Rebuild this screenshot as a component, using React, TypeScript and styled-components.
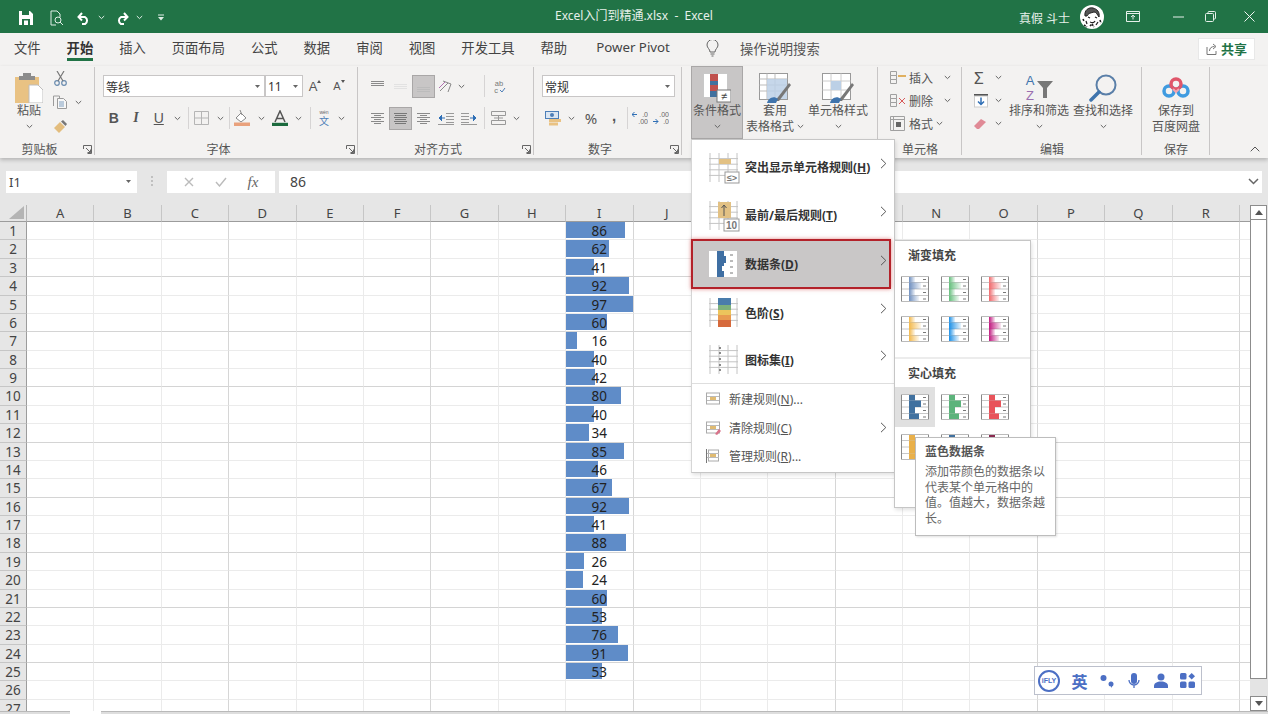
import React from 'react';
import styled, { createGlobalStyle } from 'styled-components';

const GlobalStyle = createGlobalStyle`
    html, body { margin: 0; padding: 0; background: #fff; }
    body { font-family: "Noto Sans", "Noto Sans CJK SC", sans-serif; font-size: 12px; color: #444; }
    * { box-sizing: border-box; }
`;

const Page = styled.div`
    position: relative;
    width: 1268px;
    height: 714px;
    overflow: hidden;
`;

/* title bar */
const TitleBar = styled.div`
    display: flex;
    align-items: center;
    height: 33px;
    background: #217346;
    color: #fff;
`;
const QuickAccess = styled.div`
    display: flex;
    align-items: center;
    width: 555px;
    padding: 2px 0 0 14px;
`;
const DocTitle = styled.div`
    font-size: 12px;
    white-space: pre;
    color: #e6f0ea;
    margin-top: -3px;
`;
const UserName = styled.div`
    margin-left: auto;
    font-size: 12px;
    white-space: pre;
    color: #e6f0ea;
    margin-top: 2px;
`;
const Avatar = styled.div`
    width: 24px;
    height: 24px;
    margin: 0 0 0 10px;
    border-radius: 50%;
    overflow: hidden;
    background: #fff;
`;
const WinBtn = styled.div<{ $w: number; $ml?: number }>`
    width: ${p => p.$w}px;
    margin-left: ${p => p.$ml || 0}px;
    display: flex;
    justify-content: center;
    align-items: center;
`;

/* tabs */
const TabRow = styled.div`
    display: flex;
    align-items: center;
    height: 33px;
    padding: 0 0 2px 14px;
    gap: 26px;
    background: #f3f2f1;
`;
const Tab = styled.div<{ $active?: boolean; $ml?: number }>`
    height: 25px;
    margin-left: ${p => p.$ml || 0}px;
    display: flex;
    align-items: center;
    font-size: 13.3px;
    color: ${p => (p.$active ? '#333' : '#444')};
    font-weight: ${p => (p.$active ? 700 : 400)};
    border-bottom: 3px solid ${p => (p.$active ? '#217346' : 'transparent')};
    white-space: nowrap;
`;
const TellMe = styled.div`
    display: flex;
    align-items: center;
    gap: 21px;
    margin-left: 10px;
    font-size: 13.3px;
    color: #555;
`;
const ShareBtn = styled.div`
    margin: 0 13px 0 auto;
    width: 57px;
    height: 22px;
    background: #fff;
    border: 1px solid #e8e8e8;
    display: flex;
    align-items: center;
    justify-content: center;
    gap: 3px;
    font-weight: 700;
    font-size: 13px;
    color: #217346;
`;

/* ribbon */
const Ribbon = styled.div`
    position: relative;
    z-index: 1;
    display: flex;
    height: 92px;
    background: #f3f2f1;
    box-shadow: 0 2px 4px rgba(0, 0, 0, 0.22);
`;
const Group = styled.div<{ $w: number; $plain?: boolean }>`
    position: relative;
    width: ${p => p.$w}px;
    display: flex;
    flex-direction: column;
    ${p => !p.$plain && `
        &::after {
            content: "";
            position: absolute;
            right: 0;
            top: 1px;
            bottom: 3px;
            width: 1px;
            background: #c8c6c6;
        }
    `}
`;
const GroupBody = styled.div<{ $pl?: number }>`
    height: 76px;
    padding-left: ${p => p.$pl || 0}px;
    display: flex;
`;
const GroupLabel = styled.div`
    flex: 1;
    display: flex;
    align-items: center;
    font-size: 12px;
    color: #555;
`;
const LabelText = styled.span`
    flex: 1;
    text-align: center;
`;
const Launcher = styled.span`
    width: 16px;
    display: flex;
    justify-content: center;
    padding-top: 1px;
`;
const Stack = styled.div`
    display: flex;
    flex-direction: column;
    gap: 10px;
    padding-top: 9px;
`;
const Line = styled.div`
    display: flex;
    align-items: center;
    height: 22px;
`;
const Tool = styled.span<{ $w: number; $on?: boolean }>`
    width: ${p => p.$w}px;
    height: 22px;
    flex: none;
    display: flex;
    align-items: center;
    justify-content: center;
    ${p => p.$on && 'background: #c8c6c6; box-shadow: inset 0 0 0 1px #a9a7a7; height: 23px;'}
`;
const Letter = styled.span<{ $i?: boolean; $u?: boolean }>`
    font-family: "Liberation Serif", serif;
    font-size: 14px;
    font-weight: 700;
    color: #555;
    font-style: ${p => (p.$i ? 'italic' : 'normal')};
    text-decoration: ${p => (p.$u ? 'underline' : 'none')};
`;
const Sans = styled(Letter)`
    font-family: "Liberation Sans", sans-serif;
`;
const Glyph = styled.span<{ $size: number }>`
    font-size: ${p => p.$size}px;
    line-height: 1;
    color: #555;
`;
const VSep = styled.span<{ $ml?: number; $mr?: number }>`
    width: 1px;
    height: 22px;
    flex: none;
    margin: 0 ${p => p.$mr || 0}px 0 ${p => p.$ml || 0}px;
    background: #d6d4d4;
`;
const Combo = styled.div<{ $w: number }>`
    width: ${p => p.$w}px;
    height: 22px;
    flex: none;
    background: #fff;
    border: 1px solid #c8c6c6;
    display: flex;
    align-items: center;
    justify-content: space-between;
    padding: 1px 4px 0 2px;
    font-size: 12px;
    color: #333;
`;
const BigBtn = styled.div<{ $w: number; $on?: boolean }>`
    width: ${p => p.$w}px;
    height: 73px;
    flex: none;
    padding-top: 6px;
    display: flex;
    flex-direction: column;
    align-items: center;
    line-height: 15px;
    font-size: 12px;
    color: #555;
    white-space: nowrap;
    ${p => p.$on && 'background: #c8c6c6; box-shadow: inset 0 0 0 1px #a9a7a7;'}
`;
const BigIcon = styled.div`
    height: 31px;
    display: flex;
    align-items: center;
    justify-content: center;
`;
const CapLine = styled.div`
    height: 16px;
    display: flex;
    align-items: center;
    gap: 3px;
`;
const SideRows = styled.div<{ $w?: number; $pl?: number }>`
    ${p => p.$w && `width: ${p.$w}px;`}
    padding-left: ${p => p.$pl || 0}px;
    display: flex;
    flex-direction: column;
    flex: none;
`;
const SideRow = styled.div<{ $h?: number }>`
    height: ${p => p.$h || 23}px;
    display: flex;
    align-items: center;
    gap: 3px;
    font-size: 12px;
    color: #555;
`;
const CollapseSlot = styled.div`
    position: absolute;
    right: 8px;
    bottom: 2px;
`;

/* formula bar */
const FormulaRow = styled.div`
    display: flex;
    align-items: center;
    height: 47px;
    padding: 1px 6px 0 6px;
    background: #e6e6e6;
`;
const NameBox = styled.div`
    width: 131px;
    height: 22px;
    background: #fff;
    display: flex;
    align-items: center;
    justify-content: space-between;
    padding: 0 6px 1px 3px;
    font-size: 13px;
    color: #444;
`;
const Grip = styled.div`
    width: 30px;
    display: flex;
    justify-content: center;
`;
const FxBox = styled.div`
    width: 108px;
    height: 22px;
    background: #fff;
    display: flex;
    align-items: center;
    justify-content: space-around;
    padding: 0 6px;
`;
const FxText = styled.span`
    font-family: "Liberation Serif", serif;
    font-style: italic;
    font-size: 15px;
    color: #666;
`;
const FormulaInput = styled.div`
    flex: 1;
    height: 22px;
    margin-left: 4px;
    background: #fff;
    display: flex;
    align-items: center;
    justify-content: space-between;
    padding: 0 3px 1px 11px;
    font-size: 14px;
    color: #444;
`;

/* sheet */
const SheetRow = styled.div`
    display: flex;
    height: 506px;
`;
const Sheet = styled.div`
    width: 1250px;
    overflow: hidden;
    display: grid;
    grid-template-columns: 27px repeat(19, 67.4px);
    grid-template-rows: 17px repeat(27, 18.375px);
`;
const Corner = styled.div`
    background: #e6e6e6;
    border-right: 1px solid #b5b5b5;
    border-bottom: 1px solid #9c9c9c;
    display: flex;
    align-items: flex-end;
    justify-content: flex-end;
    padding: 0 2px 2px 0;
`;
const ColHead = styled.div`
    background: #e6e6e6;
    border-right: 1px solid #c6c6c6;
    border-bottom: 1px solid #9c9c9c;
    font-size: 13px;
    line-height: 16px;
    text-align: center;
    color: #444;
`;
const RowHead = styled.div`
    background: #e6e6e6;
    border-right: 1px solid #9c9c9c;
    border-bottom: 1px solid #c6c6c6;
    font-size: 13.5px;
    line-height: 19.5px;
    text-align: center;
    color: #444;
`;
const Cell = styled.div<{ $darkCol: boolean; $darkRow: boolean }>`
    position: relative;
    border-right: 1px solid ${p => (p.$darkCol ? '#d6d6d6' : '#ebebeb')};
    border-bottom: 1px solid ${p => (p.$darkRow ? '#d4d4d4' : '#ebebeb')};
    font-size: 13.5px;
    line-height: 19.5px;
    text-align: center;
    color: #222;
`;
const Bar = styled.div`
    position: absolute;
    left: 0;
    top: 0;
    bottom: 1px;
    background: #5f8cc8;
`;
const CellValue = styled.span`
    position: relative;
`;
const ScrollTrack = styled.div`
    width: 18px;
    background: #e4e4e4;
    display: flex;
    flex-direction: column;
    padding: 0 1px 0 0;
`;
const ScrollBtn = styled.div`
    height: 15px;
    flex: none;
    background: #fff;
    border: 1px solid #8c8c8c;
    display: flex;
    align-items: center;
    justify-content: center;
`;
const ScrollThumb = styled.div`
    height: 459px;
    flex: none;
    background: #fff;
    border: 1px solid #8c8c8c;
    border-top: none;
`;
const ScrollGap = styled.div`
    flex: 1;
`;
const BottomStrip = styled.div`
    display: flex;
    height: 3px;
`;
const StripPiece = styled.div<{ $w: number; $white?: boolean }>`
    width: ${p => p.$w}px;
    background: ${p => (p.$white ? '#fff' : '#dedede')};
    ${p => !p.$white && 'border-top: 1px solid #b9b9b9;'}
`;

/* floating menu */
const Menu = styled.div`
    position: absolute;
    z-index: 5;
    left: 691px;
    top: 139px;
    width: 204px;
    height: 334px;
    padding-top: 3px;
    background: #fff;
    border: 1px solid #c6c6c6;
    border-left-color: #d6d6d6;
    box-shadow: 1px 2px 4px rgba(0, 0, 0, 0.12);
`;
const BigItem = styled.div<{ $h: number; $on?: boolean }>`
    height: ${p => p.$h}px;
    display: flex;
    align-items: center;
    font-size: 12px;
    font-weight: 700;
    color: #333;
    ${p => p.$on && `
        background: #c9c7c7;
        margin: 0 3px 0 -1px;
        border: 2px solid #b3222a;
        box-shadow: 0 0 4px rgba(200, 40, 40, 0.55);
    `}
`;
const BigItemIcon = styled.div<{ $w?: number; $pl?: number }>`
    width: ${p => p.$w || 53}px;
    padding-left: ${p => p.$pl || 17}px;
    flex: none;
    display: flex;
    align-items: center;
`;
const ItemText = styled.span`
    flex: 1;
    white-space: nowrap;
`;
const ItemChevron = styled.span<{ $w?: number; $mt?: number }>`
    width: ${p => p.$w || 14}px;
    flex: none;
    display: flex;
    margin-top: ${p => (p.$mt === undefined ? -8 : p.$mt)}px;
`;
const MenuSep = styled.div`
    height: 1px;
    margin: 0 0 1px;
    background: #dedede;
`;
const SmallItem = styled.div`
    height: 28.5px;
    display: flex;
    align-items: center;
    font-size: 12px;
    color: #555;
`;
const SmallIcon = styled.div`
    width: 37px;
    padding-left: 14px;
    flex: none;
    display: flex;
`;
const SubMenu = styled.div`
    position: absolute;
    z-index: 6;
    left: 894px;
    top: 240px;
    width: 137px;
    height: 268px;
    background: #fff;
    border: 1px solid #c6c6c6;
    box-shadow: 1px 2px 4px rgba(0, 0, 0, 0.12);
`;
const SubHead = styled.div`
    height: 28px;
    padding-left: 13px;
    display: flex;
    align-items: center;
    font-size: 12px;
    font-weight: 700;
    color: #444;
`;
const SwatchGrid = styled.div`
    display: grid;
    grid-template-columns: repeat(3, 40px);
    grid-auto-rows: 39.7px;
`;
const Swatch = styled.div<{ $on?: boolean }>`
    display: flex;
    align-items: center;
    justify-content: center;
    background: ${p => (p.$on ? '#e0e0e0' : 'transparent')};
`;
const SubSep = styled.div`
    height: 2px;
    margin: 9px 0 0;
    background: #ececec;
`;
const Tip = styled.div`
    position: absolute;
    z-index: 7;
    left: 915px;
    top: 437px;
    width: 141px;
    height: 99px;
    padding: 5px 9px;
    background: #fff;
    border: 1px solid #bdbdbd;
    box-shadow: 1px 1px 2px rgba(0, 0, 0, 0.12);
    white-space: nowrap;
`;
const TipTitle = styled.div`
    font-size: 12px;
    font-weight: 700;
    line-height: 17px;
    color: #555;
    margin-bottom: 4px;
`;
const TipBody = styled.div`
    font-size: 12px;
    line-height: 15.7px;
    color: #666;
`;

/* input method bar */
const ImeBar = styled.div`
    position: absolute;
    z-index: 4;
    left: 1034px;
    top: 666px;
    width: 168px;
    height: 29px;
    background: #fff;
    border: 1px solid #bcc0cc;
    display: flex;
    align-items: center;
    color: #4c6fc4;
`;
const ImeLogo = styled.div`
    width: 22px;
    height: 22px;
    margin: 0 6px 0 3px;
    flex: none;
    border: 2px solid #4c6fc4;
    border-radius: 50%;
    display: flex;
    align-items: center;
    justify-content: center;
    font: 700 7px "Liberation Sans", sans-serif;
`;
const ImeSlot = styled.div`
    width: 27px;
    flex: none;
    display: flex;
    justify-content: center;
    font-size: 16px;
    font-weight: 700;
`;

/* little drawings */
const Chev = ({ color = '#666' }: { color?: string }) => (
    <svg width="7" height="5" viewBox="0 0 7 5"><path d="M.8 1l2.7 2.6L6.2 1" fill="none" stroke={color} strokeWidth="1" /></svg>
);
const Caret = () => (
    <svg width="5" height="3" viewBox="0 0 5 3"><path d="M0 0h5L2.5 3z" fill="#666" /></svg>
);
const RightArrow = () => (
    <svg width="7" height="11" viewBox="0 0 7 11"><path d="M1 .8l4.800 4.700L1 10.200" fill="none" stroke="#555" strokeWidth="1" /></svg>
);
const LauncherIcon = () => (
    <svg width="9" height="9" viewBox="0 0 9 9" fill="none" stroke="#666" strokeWidth="1">
        <path d="M.5 4V.5h8v8H4.500M3 3l4.500 4.500M7.500 4.500v3h-3" />
    </svg>
);
const Lines = ({ rows, w = 13, color = '#8a8a8a' }: { rows: [number, number][]; w?: number; color?: string }) => (
    <svg width={w} height="13" viewBox={`0 0 ${w} 13`}>
        {rows.map(([x, y], i) => <path key={i} d={`M${x} ${y}H${w - x}`} stroke={color} strokeWidth="1" />)}
    </svg>
);
const IndentIcon = ({ flip }: { flip?: boolean }) => (
    <svg width="16" height="13" viewBox="0 0 16 13">
        {[1.5, 4.5, 7.5, 10.5].map(y => <path key={y} d={`M${flip ? 8 : 0} ${y}H${flip ? 16 : 8}`} stroke="#999" />)}
        <path d="M0 12.500h16" stroke="#999" />
        <path d={flip ? 'M1 6h6M4 3L1 6l3 3' : 'M9 6h6M12 3l3 3-3 3'} fill="#2f6fb5" stroke="#2f6fb5" />
    </svg>
);
const MiniSheet = ({ children, w = 30, h = 29 }: { children?: React.ReactNode; w?: number; h?: number }) => (
    <svg width={w} height={h} viewBox={`0 0 ${w} ${h}`} style={{ overflow: 'visible' }}>
        {[0, 1, 2, 3].map(i => <path key={i} d={`M${i * 9 + 1} 0V${h}`} stroke="#c4c4c4" />)}
        {[1, 2, 3, 4].map(i => <path key={i} d={`M0 ${i * 5.6}H${w - 1}`} stroke="#c4c4c4" />)}
        {children}
    </svg>
);
const SmallRuleIcon = ({ erase, bar }: { erase?: boolean; bar?: boolean }) => (
    <svg width="15" height="14" viewBox="0 0 15 14">
        {bar ? <path d="M.5 0v14" stroke="#777" /> : null}
        <rect x={bar ? 2.5 : 0.5} y="1" width={bar ? 10 : 13} height="11" fill="#fff" stroke="#aaa" />
        <path d="M1 4.500h12M1 8.500h12" stroke="#bbb" />
        <rect x="4" y="5" width="6" height="3" fill="#e0bb72" />
        {erase ? <path d="M9 13l4-5 2 2-4 4z" fill="#d9738a" /> : null}
    </svg>
);
const DataBarIcon = ({ color, gradient, id }: { color: string; gradient?: boolean; id: string }) => {
    const bars = [6, 12, 6, 10];
    return (
        <svg width="28" height="26" viewBox="0 0 28 26">
            <defs>
                <linearGradient id={id}>
                    <stop offset="0" stopColor={color} />
                    <stop offset="1" stopColor={color} stopOpacity="0.1" />
                </linearGradient>
            </defs>
            <rect width="28" height="26" fill="#fff" />
            {[1, 2, 3].map(i => <path key={i} d={`M0 ${i * 6.5}H28`} stroke="#c8c8c8" />)}
            {bars.map((b, i) => (
                <rect key={i} x="8" y={i * 6.5} width={b} height="6.5" fill={gradient ? `url(#${id})` : color} />
            ))}
            {bars.map((b, i) => <path key={i} d={`M22 ${i * 6.5 + 3.5}h3`} stroke="#777" />)}
            <path d="M.5 0V26M27.500 0V26" stroke="#888" />
            <path d="M0 .5H28M0 25.500H28" stroke="#bbb" />
        </svg>
    );
};

const columns = 'ABCDEFGHIJKLMNOPQRS'.split('');
const values = [86, 62, 41, 92, 97, 60, 16, 40, 42, 80, 40, 34, 85, 46, 67, 92, 41, 88, 26, 24, 60, 53, 76, 91, 53];
const gradientSet = ['#6f8fbf', '#63be7b', '#f0686b', '#f3b84a', '#1b8fe6', '#c0187f'];
const solidSet = ['#41719f', '#5cb37b', '#e8535a', '#e9b04a', '#41719f', '#8a2a50'];

const App = () => {
    return (
        <Page>
            <GlobalStyle />
            <TitleBar>
                <QuickAccess>
                    <Tool $w={24}>
                        <svg width="14" height="14" viewBox="0 0 14 14"><path d="M0 0h11l3 3v11H0z" fill="#fff" /><path d="M3 0h7v4H3zM3 8h8v6H3z" fill="#217346" /><path d="M5 9.500h4v4.500H5z" fill="#fff" /></svg>
                    </Tool>
                    <Tool $w={38}>
                        <svg width="14" height="16" viewBox="0 0 14 16" fill="none" stroke="#dfeee6"><path d="M1 15V1h6l3 3v3" /><path d="M1 15h5" /><circle cx="8" cy="10" r="3" /><path d="M10 12l3 3" /></svg>
                    </Tool>
                    <Tool $w={16}>
                        <svg width="14" height="14" viewBox="0 0 14 14" fill="none" stroke="#fff" strokeWidth="2"><path d="M1 6h7a4 4 0 0 1 0 7H5" /><path d="M5 2L1.500 6 5 9.500" /></svg>
                    </Tool>
                    <Tool $w={18}><Chev color="#dfeee6" /></Tool>
                    <Tool $w={24}>
                        <svg width="14" height="14" viewBox="0 0 14 14" fill="none" stroke="#fff" strokeWidth="2"><path d="M13 6H6a4 4 0 0 0 0 7h3" /><path d="M9 2l3.500 4L9 9.500" /></svg>
                    </Tool>
                    <Tool $w={10}><Chev color="#dfeee6" /></Tool>
                    <Tool $w={34}>
                        <svg width="6" height="7" viewBox="0 0 6 7"><path d="M0 1h6" stroke="#dfeee6" /><path d="M0 3h6L3 6.500z" fill="#dfeee6" /></svg>
                    </Tool>
                </QuickAccess>
                <DocTitle>Excel入门到精通.xlsx  -  Excel</DocTitle>
                <UserName>真假 斗士</UserName>
                <Avatar>
                    <svg width="24" height="24" viewBox="0 0 24 24" fill="none" stroke="#222">
                        <path d="M5 11c-1-6 4-9 8-8s7 4 6 9c-2-3-3-5-5-5-3 1-6 1-7 4z" fill="#555" />
                        <path d="M8 12l2 1M15 12l2 1M10 17c2 1 4 1 5-1M6 16l1 3M18 17l-2 3" strokeWidth="1.300" />
                        <path d="M4 20l3 2M10 21l2-2 2 3M3 14l1 2M20 15l1 3" strokeWidth="1.600" strokeDasharray="2 1" />
                    </svg>
                </Avatar>
                <WinBtn $w={40} $ml={9}>
                    <svg width="14" height="11" viewBox="0 0 14 11" fill="none" stroke="#e6f0ea"><path d="M.5 .5h13v10H.5zM.5 2.500h13" /><path d="M7 8.500V4.500M5 6l2-1.800L9 6" /></svg>
                </WinBtn>
                <WinBtn $w={34} $ml={8}>
                    <svg width="11" height="2" viewBox="0 0 11 2"><path d="M0 1h11" stroke="#e6f0ea" /></svg>
                </WinBtn>
                <WinBtn $w={30}>
                    <svg width="11" height="11" viewBox="0 0 11 11" fill="none" stroke="#e6f0ea"><rect x=".5" y="2.500" width="8" height="8" rx="1" /><path d="M3 2.500V1.500a1 1 0 0 1 1-1h5.500a1 1 0 0 1 1 1V7a1 1 0 0 1-1 1h-1" /></svg>
                </WinBtn>
                <WinBtn $w={38} $ml={5}>
                    <svg width="11" height="11" viewBox="0 0 11 11"><path d="M.5 .5l10 10M10.500 .5l-10 10" stroke="#f0f6f2" /></svg>
                </WinBtn>
            </TitleBar>

            <TabRow>
                <Tab>文件</Tab>
                <Tab $active>开始</Tab>
                <Tab>插入</Tab>
                <Tab>页面布局</Tab>
                <Tab>公式</Tab>
                <Tab>数据</Tab>
                <Tab>审阅</Tab>
                <Tab>视图</Tab>
                <Tab>开发工具</Tab>
                <Tab>帮助</Tab>
                <Tab $ml={3}>Power Pivot</Tab>
                <TellMe>
                    <svg width="13" height="17" viewBox="0 0 13 17" fill="none" stroke="#666"><path d="M4 12c0-3-3-4-3-7a5.500 5.500 0 0 1 11 0c0 3-3 4-3 7z" /><path d="M4.500 14h4M5.500 16h2" /></svg>
                    操作说明搜索
                </TellMe>
                <ShareBtn>
                    <svg width="12" height="12" viewBox="0 0 12 12" fill="none" stroke="#777"><path d="M1 4v7.500h9V8" /><path d="M3.500 8c0-3 2-4.500 5-4.500M7 1l3 2.500L7 6" /></svg>
                    共享
                </ShareBtn>
            </TabRow>

            <Ribbon>
                <Group $w={95}>
                    <GroupBody $pl={6}>
                        <BigBtn $w={46}>
                            <BigIcon>
                                <svg width="28" height="30" viewBox="0 0 28 30">
                                    <path d="M0 4h24v26H0z" fill="#e9c283" />
                                    <path d="M8 0h8v3h4v4H4V3h4z" fill="#8c8c8c" />
                                    <path d="M14 12h9l5 5v13H14z" fill="#fff" stroke="#bdbdbd" />
                                </svg>
                            </BigIcon>
                            粘贴
                            <CapLine><Chev /></CapLine>
                        </BigBtn>
                        <SideRows>
                            <SideRow $h={24}>
                                <Tool $w={16}>
                                    <svg width="13" height="15" viewBox="0 0 13 15" fill="none" stroke="#6a8caf" strokeWidth="1.200"><circle cx="3" cy="12" r="2.300" /><circle cx="10" cy="12" r="2.300" /><path d="M4 10L10 0M9 10L3 0" stroke="#777" /></svg>
                                </Tool>
                            </SideRow>
                            <SideRow $h={24}>
                                <Tool $w={16}>
                                    <svg width="14" height="14" viewBox="0 0 14 14" fill="none" stroke="#9b9b9b"><path d="M.5 11V1h6v2" /><path d="M4.500 3.500h6l3 3v7h-9z" fill="#f7f7f7" /><path d="M6 7h5M6 9h5M6 11h5" stroke="#7f9fc0" /></svg>
                                </Tool>
                                <Tool $w={14}><Chev /></Tool>
                            </SideRow>
                            <SideRow $h={24}>
                                <Tool $w={16}>
                                    <svg width="13" height="13" viewBox="0 0 13 13"><path d="M0 8l6-6 5 5-6 6z" fill="#e3bd7e" /><path d="M7 1.500l2-1.500 4 4-1.500 2z" fill="#777" /></svg>
                                </Tool>
                            </SideRow>
                        </SideRows>
                    </GroupBody>
                    <GroupLabel><LabelText>剪贴板</LabelText><Launcher><LauncherIcon /></Launcher></GroupLabel>
                </Group>

                <Group $w={263}>
                    <GroupBody $pl={8}>
                        <Stack>
                            <Line>
                                <Combo $w={162}>等线<Caret /></Combo>
                                <Combo $w={38}><span>11</span><Caret /></Combo>
                                <Tool $w={24}><Sans style={{ fontWeight: 400, fontSize: 13 }}>A</Sans><svg width="4" height="3" viewBox="0 0 4 3" style={{ marginBottom: 9 }}><path d="M0 3l2-3 2 3z" fill="#555" /></svg></Tool>
                                <Tool $w={24}><Sans style={{ fontWeight: 400, fontSize: 11 }}>A</Sans><svg width="4" height="3" viewBox="0 0 4 3" style={{ marginBottom: 9 }}><path d="M0 0l2 3 2-3z" fill="#555" /></svg></Tool>
                            </Line>
                            <Line>
                                <Tool $w={21.5}><Sans>B</Sans></Tool>
                                <Tool $w={23}><Letter $i>I</Letter></Tool>
                                <Tool $w={22.5}><Sans style={{ fontWeight: 400 }} $u>U</Sans></Tool>
                                <Tool $w={14}><Chev /></Tool>
                                <VSep $ml={4} $mr={3} />
                                <Tool $w={19}>
                                    <svg width="15" height="14" viewBox="0 0 15 14" fill="none" stroke="#b5b5b5"><path d="M.5 .5h14v13H.5zM7.500 .5v13M.5 7h14" /></svg>
                                </Tool>
                                <Tool $w={18}><Chev /></Tool>
                                <VSep />
                                <Tool $w={24}>
                                    <svg width="16" height="16" viewBox="0 0 16 16"><path d="M2 8l5-5 5 5-5 4z" fill="#fff" stroke="#888" /><path d="M6 0l2 5" stroke="#888" /><rect y="12.500" width="16" height="3.500" fill="#e9a17c" /></svg>
                                </Tool>
                                <Tool $w={14}><Chev /></Tool>
                                <Tool $w={24}>
                                    <svg width="16" height="16" viewBox="0 0 16 16"><path d="M3 12L8 1l5 11M5 8.500h6" fill="none" stroke="#555" strokeWidth="1.500" /><rect y="12.800" width="16" height="3.200" fill="#1c6b3e" /></svg>
                                </Tool>
                                <Tool $w={13}><Chev /></Tool>
                                <VSep $ml={5} $mr={3} />
                                <Tool $w={20}>
                                    <svg width="18" height="18" viewBox="0 0 18 18"><text x="9" y="5" fontSize="5" textAnchor="middle" fill="#666" fontFamily="Liberation Sans">wén</text><text x="9" y="16" fontSize="10" textAnchor="middle" fill="#4d7fb8" fontFamily="Noto Sans CJK SC">文</text></svg>
                                </Tool>
                                <Tool $w={15}><Chev /></Tool>
                            </Line>
                        </Stack>
                    </GroupBody>
                    <GroupLabel><LabelText>字体</LabelText><Launcher><LauncherIcon /></Launcher></GroupLabel>
                </Group>

                <Group $w={176}>
                    <GroupBody $pl={7.5}>
                        <Stack>
                            <Line>
                                <Tool $w={23}><Lines rows={[[0, 1.5], [0, 3.5], [0, 5.5]]} /></Tool>
                                <Tool $w={23}><Lines rows={[[0, 4.5], [0, 6.5], [0, 8.5]]} color="#e2e2e2" /></Tool>
                                <Tool $w={23} $on><Lines rows={[[0, 7.5], [0, 9.5], [0, 11.5]]} color="#bcbcbc" /></Tool>
                                <Tool $w={21}>
                                    <svg width="15" height="14" viewBox="0 0 15 14" fill="none"><path d="M2 12l8-8M5 2l8 3-3 8" stroke="#888" /><path d="M1 9l6-6" stroke="#b06fb0" /></svg>
                                </Tool>
                                <Tool $w={12}><Chev /></Tool>
                                <VSep $ml={16} $mr={3} />
                                <Tool $w={22}>
                                    <svg width="14" height="15" viewBox="0 0 14 15"><text x="7" y="6.500" fontSize="7.500" textAnchor="middle" fill="#777" fontFamily="Liberation Sans">ab</text><text x="4" y="14" fontSize="7.500" textAnchor="middle" fill="#777" fontFamily="Liberation Sans">c</text><path d="M8 11l2 2 3-4" fill="none" stroke="#4d7fb8" /></svg>
                                </Tool>
                            </Line>
                            <Line>
                                <Tool $w={23}><Lines rows={[[0, 1.5], [3, 3.5], [0, 5.5], [3, 7.5], [0, 9.5], [3, 11.5]]} /></Tool>
                                <Tool $w={23} $on><Lines rows={[[0, 1.5], [1, 3.5], [0, 5.5], [1, 7.5], [0, 9.5], [1, 11.5]]} color="#777" /></Tool>
                                <Tool $w={23}><Lines rows={[[0, 1.5], [3, 3.5], [0, 5.5], [3, 7.5], [0, 9.5], [3, 11.5]]} /></Tool>
                                <Tool $w={23}><IndentIcon flip /></Tool>
                                <Tool $w={23}><IndentIcon /></Tool>
                                <VSep $ml={3} $mr={3} />
                                <Tool $w={22}>
                                    <svg width="15" height="14" viewBox="0 0 15 14" fill="none" stroke="#999"><path d="M.5 .5h14v4H.5zM.5 9.500h14v4H.5zM7.500 4.500v5M3 7h9" /></svg>
                                </Tool>
                                <Tool $w={14}><Chev /></Tool>
                            </Line>
                        </Stack>
                    </GroupBody>
                    <GroupLabel><LabelText>对齐方式</LabelText><Launcher><LauncherIcon /></Launcher></GroupLabel>
                </Group>

                <Group $w={148}>
                    <GroupBody $pl={8}>
                        <Stack>
                            <Line><Combo $w={133}>常规<Caret /></Combo></Line>
                            <Line>
                                <Tool $w={22}>
                                    <svg width="16" height="15" viewBox="0 0 16 15"><rect x=".5" y=".5" width="13" height="7" fill="#dbe6f2" stroke="#4d7fb8" /><circle cx="7" cy="4" r="2" fill="#4d7fb8" /><rect x="4" y="8" width="12" height="3" fill="#e9c283" /><rect x="4" y="11.500" width="9" height="3" fill="#e9c283" /></svg>
                                </Tool>
                                <Tool $w={14}><Chev /></Tool>
                                <Tool $w={26}><Glyph $size={15}>%</Glyph></Tool>
                                <Tool $w={20}><Sans style={{ fontSize: 15, marginTop: -6 }}>,</Sans></Tool>
                                <VSep $ml={3} $mr={1} />
                                <Tool $w={22}>
                                    <svg width="16" height="14" viewBox="0 0 16 14"><text x="16" y="6" fontSize="7" textAnchor="end" fill="#666" fontFamily="Liberation Sans">.0</text><text x="16" y="13" fontSize="7" textAnchor="end" fill="#666" fontFamily="Liberation Sans">.00</text><path d="M0 3.500h5M2.500 1L0 3.500 2.500 6" fill="none" stroke="#2f6fb5" /></svg>
                                </Tool>
                                <Tool $w={20}>
                                    <svg width="16" height="14" viewBox="0 0 16 14"><text x="16" y="6" fontSize="7" textAnchor="end" fill="#666" fontFamily="Liberation Sans">.00</text><text x="16" y="13" fontSize="7" textAnchor="end" fill="#666" fontFamily="Liberation Sans">.0</text><path d="M0 10.500h5M2.500 8L5 10.500 2.500 13" fill="none" stroke="#2f6fb5" /></svg>
                                </Tool>
                            </Line>
                        </Stack>
                    </GroupBody>
                    <GroupLabel><LabelText>数字</LabelText><Launcher><LauncherIcon /></Launcher></GroupLabel>
                </Group>

                <Group $w={196}>
                    <GroupBody $pl={9}>
                        <BigBtn $w={52} $on>
                            <BigIcon>
                                <svg width="28" height="30" viewBox="0 0 28 30">
                                    <rect x=".5" y=".5" width="24" height="24" fill="#fff" stroke="#c8c8c8" />
                                    <rect x="7" y="1" width="8" height="7" fill="#c0504d" />
                                    <rect x="7" y="8" width="8" height="4" fill="#41719f" />
                                    <rect x="7" y="12" width="8" height="6" fill="#c0504d" />
                                    <rect x="7" y="18" width="8" height="6" fill="#41719f" />
                                    <rect x="14" y="17" width="14" height="12" fill="#fff" stroke="#777" />
                                    <text x="21" y="27" fontSize="11" textAnchor="middle" fill="#444" fontFamily="Liberation Sans">≠</text>
                                </svg>
                            </BigIcon>
                            条件格式
                            <CapLine><Chev /></CapLine>
                        </BigBtn>
                        <BigBtn $w={64}>
                            <BigIcon>
                                <svg width="32" height="30" viewBox="0 0 32 30">
                                    <rect x=".5" y=".5" width="28" height="26" fill="#fff" stroke="#999" />
                                    <path d="M.5 6h28M.5 12h28M.5 18h28M8 .5v26M16 .5v26" stroke="#bbb" />
                                    <path d="M8 6h20v20H8z" fill="#bcd0e6" opacity=".85" />
                                    <path d="M16 28l14-18 2 2-12 16z" fill="#777" />
                                    <path d="M8 30c1-4 6-8 11-4l-2 4z" fill="#3f74ad" />
                                </svg>
                            </BigIcon>
                            套用
                            <CapLine>表格格式<Chev /></CapLine>
                        </BigBtn>
                        <BigBtn $w={62}>
                            <BigIcon>
                                <svg width="32" height="30" viewBox="0 0 32 30">
                                    <rect x=".5" y=".5" width="28" height="26" fill="#fff" stroke="#999" />
                                    <path d="M.5 8h28M.5 17h28M9 .5v26M19 .5v26" stroke="#ccc" />
                                    <rect x="9" y="8" width="10" height="9" fill="#bcd0e6" />
                                    <path d="M16 28l14-18 2 2-12 16z" fill="#777" />
                                    <path d="M8 30c1-4 6-8 11-4l-2 4z" fill="#3f74ad" />
                                </svg>
                            </BigIcon>
                            单元格样式
                            <CapLine><Chev /></CapLine>
                        </BigBtn>
                    </GroupBody>
                    <GroupLabel />
                </Group>

                <Group $w={84}>
                    <GroupBody $pl={12}>
                        <SideRows>
                            <SideRow>
                                <svg width="16" height="14" viewBox="0 0 16 14" fill="none" stroke="#a0a0a0"><path d="M.5 .5h6v4h-6zM.5 4.500h6v4h-6zM.5 8.500h6v4h-6z" /><path d="M8 5h8" stroke="#e0b060" strokeWidth="2" /></svg>
                                插入
                                <Tool $w={18} style={{ marginLeft: 2 }}><Chev /></Tool>
                            </SideRow>
                            <SideRow>
                                <svg width="16" height="14" viewBox="0 0 16 14" fill="none" stroke="#a0a0a0"><path d="M.5 .5h6v4h-6zM.5 4.500h6v4h-6zM.5 8.500h6v4h-6z" /><path d="M9 4l6 6M15 4l-6 6" stroke="#d85a5a" /></svg>
                                删除
                                <Tool $w={18} style={{ marginLeft: 2 }}><Chev /></Tool>
                            </SideRow>
                            <SideRow>
                                <svg width="16" height="15" viewBox="0 0 16 15" fill="none" stroke="#a0a0a0"><path d="M.5 .5h14v14H.5zM.5 3.500h14M3.500 .5v14" /><rect x="6" y="6" width="5" height="5" fill="#666" stroke="none" /></svg>
                                格式
                                <Chev />
                            </SideRow>
                        </SideRows>
                    </GroupBody>
                    <GroupLabel><LabelText>单元格</LabelText></GroupLabel>
                </Group>

                <Group $w={180}>
                    <GroupBody>
                        <SideRows $w={45} $pl={12}>
                            <SideRow>
                                <Glyph $size={17} style={{ width: 14 }}>Σ</Glyph>
                                <Tool $w={14}><Chev /></Tool>
                            </SideRow>
                            <SideRow>
                                <svg width="14" height="14" viewBox="0 0 14 14"><rect y="0" width="14" height="2" fill="#555" /><rect x=".5" y="2" width="13" height="11" fill="#fff" stroke="#ccc" /><path d="M7 3.500v7M4 7.500l3 3 3-3" fill="none" stroke="#2f6fb5" strokeWidth="1.500" /></svg>
                                <Tool $w={14}><Chev /></Tool>
                            </SideRow>
                            <SideRow>
                                <svg width="14" height="12" viewBox="0 0 14 12"><path d="M0 8l7-7 5 3-7 7H3z" fill="#e08a96" /></svg>
                                <Tool $w={14}><Chev /></Tool>
                            </SideRow>
                        </SideRows>
                        <BigBtn $w={64}>
                            <BigIcon>
                                <svg width="30" height="29" viewBox="0 0 30 29">
                                    <text x="6" y="12" fontSize="13" textAnchor="middle" fill="#3f74ad" fontFamily="Liberation Sans">A</text>
                                    <text x="6" y="27" fontSize="13" textAnchor="middle" fill="#9a6fb0" fontFamily="Liberation Sans">Z</text>
                                    <path d="M13 8h16l-6 7v10h-4V15z" fill="#777" />
                                </svg>
                            </BigIcon>
                            排序和筛选
                            <CapLine><Chev /></CapLine>
                        </BigBtn>
                        <BigBtn $w={64}>
                            <BigIcon>
                                <svg width="28" height="28" viewBox="0 0 28 28" fill="none">
                                    <circle cx="17" cy="11" r="9.500" stroke="#5a7fa8" strokeWidth="2" />
                                    <path d="M10 18L2 26" stroke="#3f74ad" strokeWidth="3.500" strokeLinecap="round" />
                                </svg>
                            </BigIcon>
                            查找和选择
                            <CapLine><Chev /></CapLine>
                        </BigBtn>
                    </GroupBody>
                    <GroupLabel><LabelText>编辑</LabelText></GroupLabel>
                </Group>

                <Group $w={68}>
                    <GroupBody>
                        <BigBtn $w={68}>
                            <BigIcon>
                                <svg width="28" height="22" viewBox="0 0 28 22" fill="none" strokeWidth="3.500">
                                    <circle cx="7" cy="14" r="5" stroke="#3f9be0" />
                                    <circle cx="21" cy="14" r="5" stroke="#3f9be0" />
                                    <circle cx="14" cy="7" r="5" stroke="#e0566a" />
                                    <path d="M11 12l3 3 3-3" stroke="#f3a4ae" strokeWidth="2" />
                                </svg>
                            </BigIcon>
                            保存到
                            <CapLine>百度网盘</CapLine>
                        </BigBtn>
                    </GroupBody>
                    <GroupLabel><LabelText>保存</LabelText></GroupLabel>
                </Group>

                <CollapseSlot>
                    <svg width="10" height="6" viewBox="0 0 10 6"><path d="M.7 5.300L5 1l4.300 4.300" fill="none" stroke="#555" /></svg>
                </CollapseSlot>
            </Ribbon>

            <FormulaRow>
                <NameBox>I1<Caret /></NameBox>
                <Grip>
                    <svg width="2" height="12" viewBox="0 0 2 12"><path d="M1 0v12" stroke="#999" strokeDasharray="2 2" /></svg>
                </Grip>
                <FxBox>
                    <svg width="10" height="10" viewBox="0 0 10 10"><path d="M1 1l8 8M9 1l-8 8" stroke="#bbb" strokeWidth="1.400" /></svg>
                    <svg width="12" height="10" viewBox="0 0 12 10"><path d="M1 5l3.500 4L11 1" fill="none" stroke="#bbb" strokeWidth="1.400" /></svg>
                    <FxText>fx</FxText>
                </FxBox>
                <FormulaInput>
                    86
                    <svg width="11" height="7" viewBox="0 0 11 7"><path d="M1 1l4.500 4.500L10 1" fill="none" stroke="#666" strokeWidth="1.500" /></svg>
                </FormulaInput>
            </FormulaRow>

            <SheetRow>
                <Sheet>
                    <Corner>
                        <svg width="15" height="13" viewBox="0 0 15 13"><path d="M15 0v13H0z" fill="#b4b4b4" /></svg>
                    </Corner>
                    {columns.map(c => <ColHead key={c}>{c === 'S' ? '' : c}</ColHead>)}
                    {Array.from({ length: 27 }, (_, r) => (
                        <React.Fragment key={r}>
                            <RowHead>{r + 1}</RowHead>
                            {columns.map((c, i) => {
                                const v = c === 'I' ? values[r] : undefined;
                                return (
                                    <Cell key={c} $darkCol={(i + 1) % 3 === 0} $darkRow={(r + 1) % 3 === 0}>
                                        {v !== undefined && <Bar style={{ width: v * 0.685 }} />}
                                        {v !== undefined && <CellValue>{v}</CellValue>}
                                    </Cell>
                                );
                            })}
                        </React.Fragment>
                    ))}
                </Sheet>
                <ScrollTrack>
                    <ScrollBtn>
                        <svg width="8" height="5" viewBox="0 0 8 5"><path d="M4 0l4 5H0z" fill="#555" /></svg>
                    </ScrollBtn>
                    <ScrollThumb />
                    <ScrollGap />
                    <ScrollBtn>
                        <svg width="8" height="5" viewBox="0 0 8 5"><path d="M0 0h8L4 5z" fill="#555" /></svg>
                    </ScrollBtn>
                </ScrollTrack>
            </SheetRow>
            <BottomStrip>
                <StripPiece $w={70} />
                <StripPiece $w={31} $white />
                <StripPiece $w={1167} />
            </BottomStrip>

            <Menu>
                <BigItem $h={48}>
                    <BigItemIcon>
                        <MiniSheet><rect x="10" y="6" width="12" height="5" fill="#e2c184" /><rect x="16" y="19" width="14" height="11" fill="#fff" stroke="#999" /><text x="23" y="28" fontSize="9" textAnchor="middle" fill="#777" fontFamily="Liberation Sans">≤&gt;</text></MiniSheet>
                    </BigItemIcon>
                    <ItemText>突出显示单元格规则(<u>H</u>)</ItemText>
                    <ItemChevron><RightArrow /></ItemChevron>
                </BigItem>
                <BigItem $h={48}>
                    <BigItemIcon>
                        <MiniSheet><rect x="9" y="1" width="13" height="16" fill="#e2c184" /><path d="M15 15V4M12.500 7L15 4l2.500 3" fill="none" stroke="#555" /><rect x="15" y="18" width="15" height="12" fill="#fff" stroke="#999" /><text x="22.500" y="28" fontSize="10" textAnchor="middle" fill="#777" fontFamily="Liberation Sans">10</text></MiniSheet>
                    </BigItemIcon>
                    <ItemText>最前/最后规则(<u>T</u>)</ItemText>
                    <ItemChevron><RightArrow /></ItemChevron>
                </BigItem>
                <BigItem $h={50} $on>
                    <BigItemIcon $w={52} $pl={16}>
                        <svg width="28" height="26" viewBox="0 0 28 26">
                            <rect width="28" height="26" fill="#fff" />
                            <path d="M8 0h7v5h2v7h-2v3h-2v5h2v6H8z" fill="#3f6fa3" />
                            <path d="M21 4h3M21 10h3M21 16h3M21 22h3" stroke="#777" />
                        </svg>
                    </BigItemIcon>
                    <ItemText>数据条(<u>D</u>)</ItemText>
                    <ItemChevron $w={9}><RightArrow /></ItemChevron>
                </BigItem>
                <BigItem $h={47}>
                    <BigItemIcon>
                        <MiniSheet>
                            <rect x="9" y="0" width="13" height="7" fill="#4a7cab" />
                            <rect x="9" y="7" width="13" height="5" fill="#7db07a" />
                            <rect x="9" y="12" width="13" height="5" fill="#ecc45c" />
                            <rect x="9" y="17" width="13" height="5" fill="#e89a50" />
                            <rect x="9" y="22" width="13" height="7" fill="#d66a3c" />
                        </MiniSheet>
                    </BigItemIcon>
                    <ItemText>色阶(<u>S</u>)</ItemText>
                    <ItemChevron><RightArrow /></ItemChevron>
                </BigItem>
                <BigItem $h={47}>
                    <BigItemIcon>
                        <MiniSheet>
                            {[3, 8, 14, 20, 25].map(y => <circle key={y} cx="11" cy={y} r="1" fill="#666" />)}
                        </MiniSheet>
                    </BigItemIcon>
                    <ItemText>图标集(<u>I</u>)</ItemText>
                    <ItemChevron><RightArrow /></ItemChevron>
                </BigItem>
                <MenuSep />
                <SmallItem>
                    <SmallIcon><SmallRuleIcon /></SmallIcon>
                    <ItemText>新建规则(<u>N</u>)...</ItemText>
                </SmallItem>
                <SmallItem>
                    <SmallIcon><SmallRuleIcon erase /></SmallIcon>
                    <ItemText>清除规则(<u>C</u>)</ItemText>
                    <ItemChevron $mt={0}><RightArrow /></ItemChevron>
                </SmallItem>
                <SmallItem>
                    <SmallIcon><SmallRuleIcon bar /></SmallIcon>
                    <ItemText>管理规则(<u>R</u>)...</ItemText>
                </SmallItem>
            </Menu>

            <SubMenu>
                <SubHead>渐变填充</SubHead>
                <SwatchGrid>
                    {gradientSet.map((c, i) => (
                        <Swatch key={i}><DataBarIcon color={c} gradient id={`g${i}`} /></Swatch>
                    ))}
                </SwatchGrid>
                <SubSep />
                <SubHead>实心填充</SubHead>
                <SwatchGrid>
                    {solidSet.map((c, i) => (
                        <Swatch key={i} $on={i === 0}><DataBarIcon color={c} id={`s${i}`} /></Swatch>
                    ))}
                </SwatchGrid>
            </SubMenu>

            <Tip>
                <TipTitle>蓝色数据条</TipTitle>
                <TipBody>
                    添加带颜色的数据条以<br />
                    代表某个单元格中的<br />
                    值。值越大，数据条越<br />
                    长。
                </TipBody>
            </Tip>

            <ImeBar>
                <ImeLogo>iFLY</ImeLogo>
                <ImeSlot>英</ImeSlot>
                <ImeSlot>
                    <svg width="14" height="14" viewBox="0 0 14 14" fill="#4c6fc4"><circle cx="3.500" cy="4" r="3" /><circle cx="11" cy="10" r="2.500" /><path d="M11 12l2-1-2 3z" /></svg>
                </ImeSlot>
                <ImeSlot>
                    <svg width="12" height="16" viewBox="0 0 12 16" fill="#4c6fc4"><rect x="3" y="0" width="6" height="11" rx="3" /><path d="M1 7a5 5 0 0 0 10 0M6 12v3" fill="none" stroke="#4c6fc4" strokeWidth="1.300" /></svg>
                </ImeSlot>
                <ImeSlot>
                    <svg width="14" height="15" viewBox="0 0 14 15" fill="#4c6fc4"><circle cx="7" cy="4" r="3.500" /><path d="M0 15v-2c0-3 3-4.500 7-4.500s7 1.500 7 4.500v2z" /></svg>
                </ImeSlot>
                <ImeSlot>
                    <svg width="15" height="15" viewBox="0 0 15 15" fill="#4c6fc4"><rect width="6.500" height="6.500" rx="1.500" /><rect y="8.500" width="6.500" height="6.500" rx="1.500" /><rect x="8.500" y="8.500" width="6.500" height="6.500" rx="1.500" /><path d="M11.700 0l3.300 3.300-3.300 3.300-3.300-3.300z" /></svg>
                </ImeSlot>
            </ImeBar>
        </Page>
    );
};

export default App;
